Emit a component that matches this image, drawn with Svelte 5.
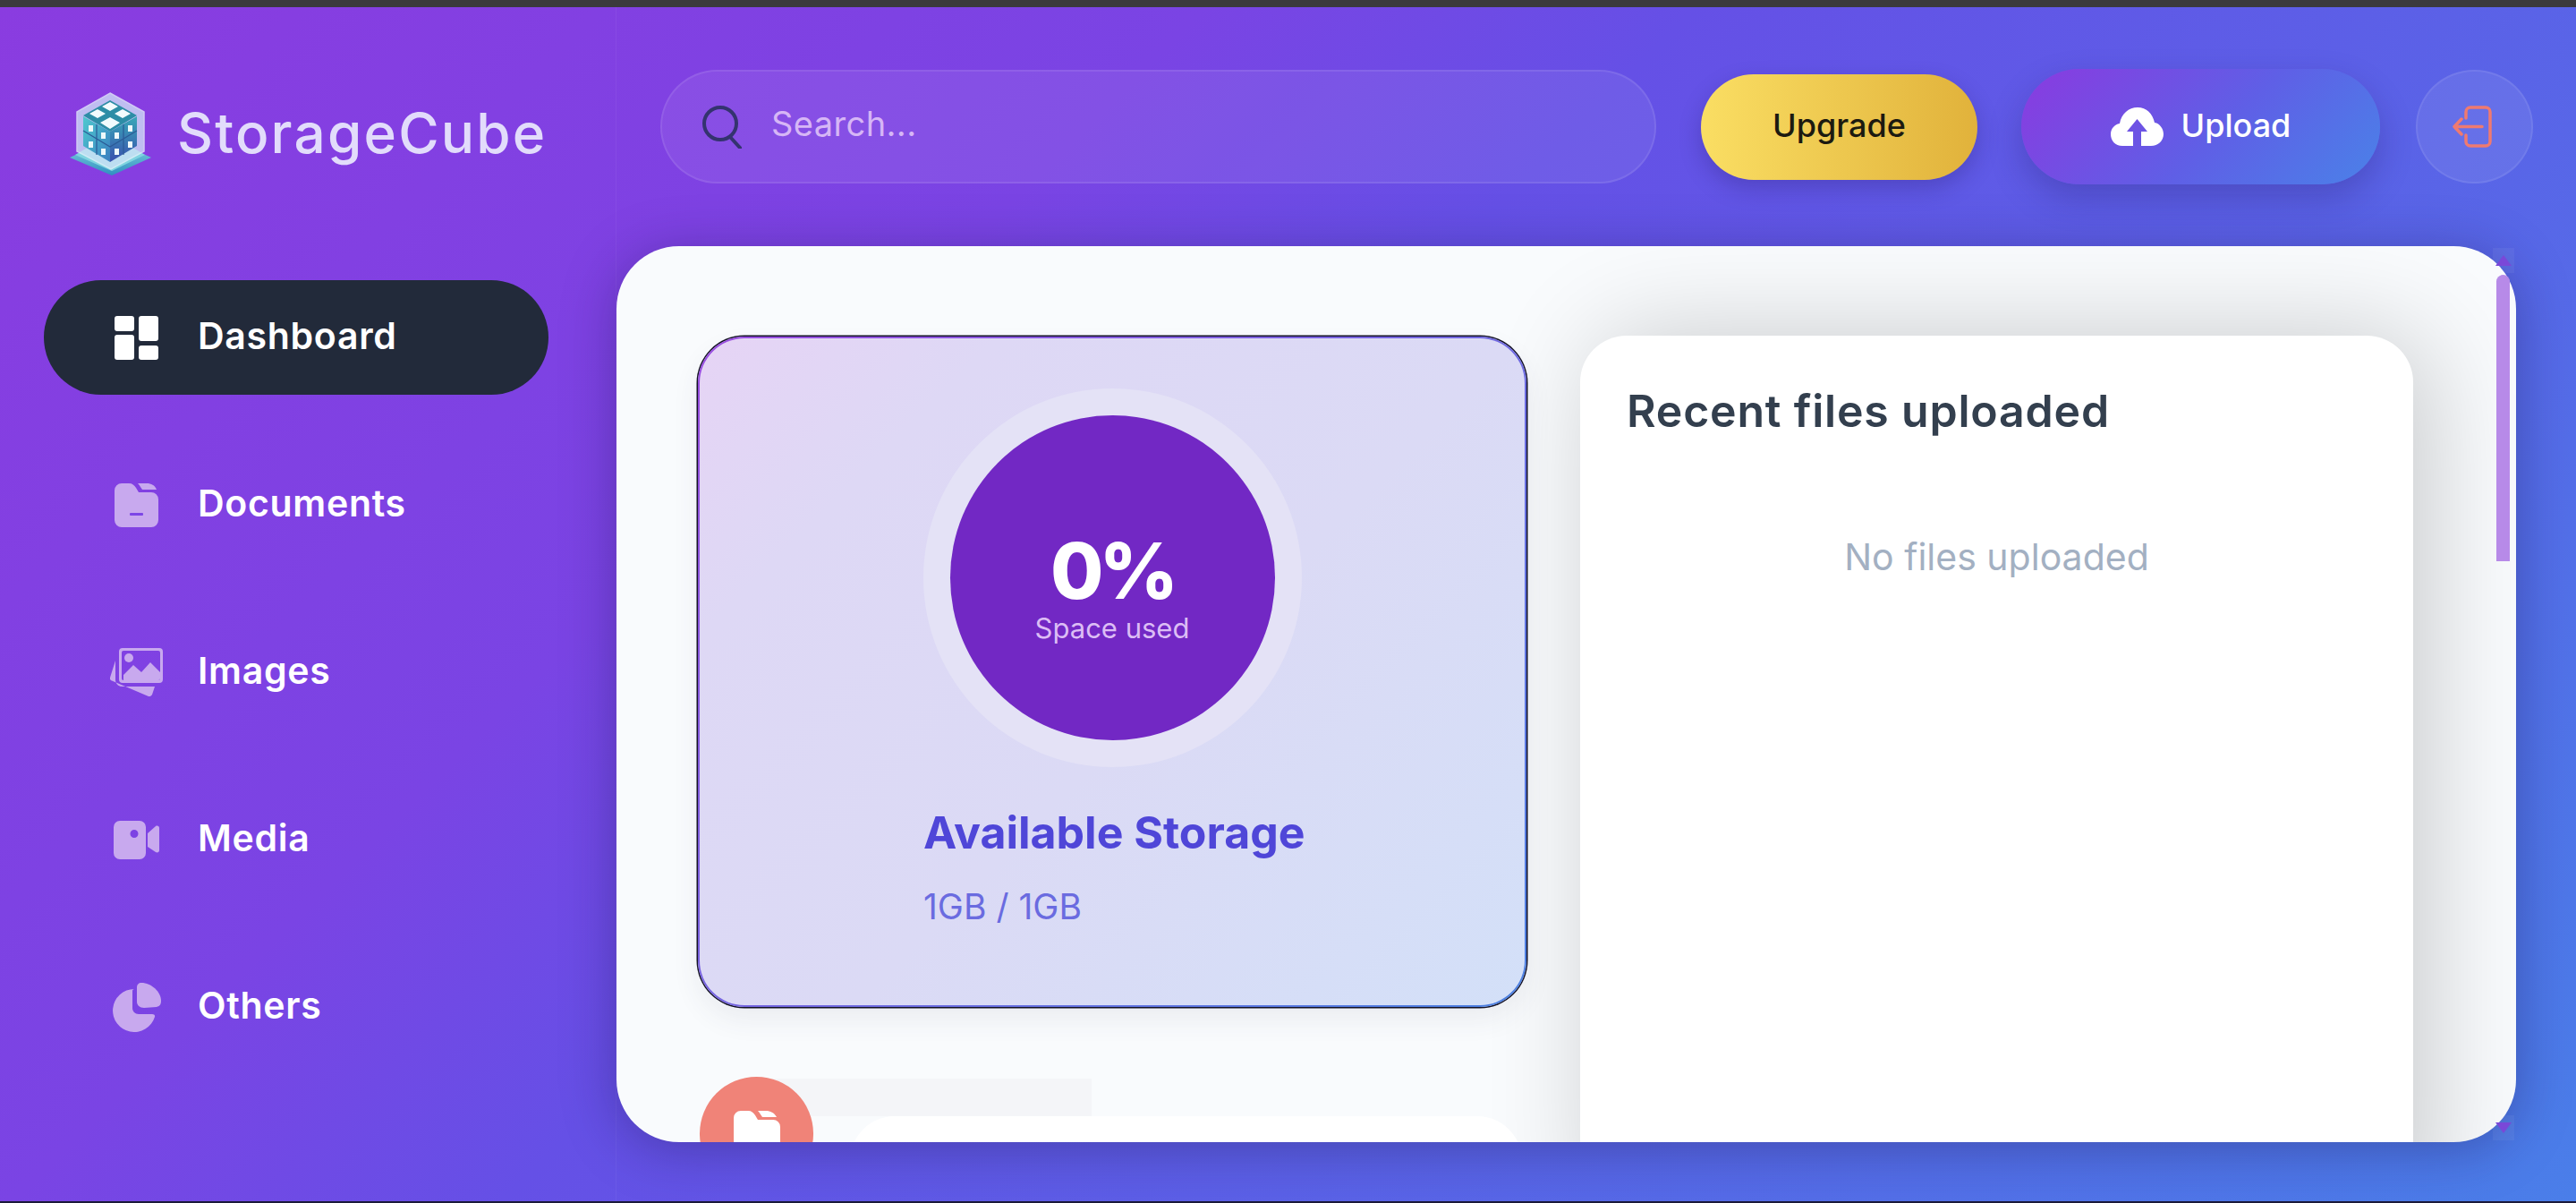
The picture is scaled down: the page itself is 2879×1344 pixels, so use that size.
<script>
  // StorageCube dashboard, empty account state
  const nav = [
    { key: 'dashboard', label: 'Dashboard', active: true },
    { key: 'documents', label: 'Documents' },
    { key: 'images', label: 'Images' },
    { key: 'media', label: 'Media' },
    { key: 'others', label: 'Others' }
  ];
  const used = 0;
</script>

<div class="app">
  <div class="chrome"></div>
  <div class="shell">
    <aside class="sidebar">
      <div class="brand">
        <svg class="logo" viewBox="0 0 95 93">
          <defs>
            <linearGradient id="plate" x1="0" y1="0" x2="0" y2="1"><stop offset="0" stop-color="#8fdbe4"/><stop offset="1" stop-color="#2f8fc0"/></linearGradient>
            <linearGradient id="faceL" x1="0" y1="0" x2="1" y2="1"><stop offset="0" stop-color="#4fc9cf"/><stop offset="1" stop-color="#3a7fc0"/></linearGradient>
            <linearGradient id="faceR" x1="0" y1="0" x2="0" y2="1"><stop offset="0" stop-color="#38a8b8"/><stop offset="1" stop-color="#3a50ae"/></linearGradient>
          </defs>
          <path d="M47 52 93 73 49 93 2 73z" fill="url(#plate)"/>
          <path d="M47 47 86 70 49 88 8 70z" fill="#7fd4e0"/>
          <path d="M47 1 85 22V66L48 86 10 66V22z" fill="#cfe2f6" opacity=".78" stroke="#e6f2fb" stroke-width="1.5"/>
          <path d="M47 9 77 26 47 44 17 26z" fill="#2d8da6"/>
          <path d="M17 27 47 44V78L17 60z" fill="url(#faceL)"/>
          <path d="M77 27 47 44V78L77 60z" fill="url(#faceR)"/>
          <path d="M47 11 56 16 47 21 38 16zM33 19 42 24 33 29 24 24zM61 19 70 24 61 29 52 24zM47 28 58 34 47 41 36 34z" fill="#f2fbfd"/>
          <path d="M32 36V70M62 36V70M17 43 47 61 77 43" stroke="#2b5a96" stroke-width="1.2" fill="none"/>
          <path d="M23 37h5v7h-5zM37 45h5v7h-5zM23 55h5v7h-5zM37 63h5v7h-5zM52 45h5v7h-5zM67 37h5v7h-5zM52 63h5v7h-5zM67 55h5v7h-5z" fill="#eef9fb"/>
        </svg>
        <span class="brand-name">StorageCube</span>
      </div>

      <nav class="nav">
        {#each nav as item}
          <a class="nav-item" class:active={item.active} href="#{item.key}">
            <span class="nav-icon">
              {#if item.key === 'dashboard'}
                <svg viewBox="0 0 49 49" width="49" height="49" fill="#fff">
                  <rect x="0" y="0" width="22" height="17" rx="3"/>
                  <rect x="0" y="21" width="22" height="28" rx="3"/>
                  <rect x="27" y="0" width="22" height="28" rx="3"/>
                  <rect x="27" y="33" width="22" height="16" rx="3"/>
                </svg>
              {:else if item.key === 'documents'}
                <svg viewBox="0 0 49 49" width="49" height="49" fill="#c8a9ee">
                  <path d="M0 8a8 8 0 0 1 8-8h8c4 0 6 2 8 5l3 5h14a8 8 0 0 1 8 8v23a8 8 0 0 1-8 8H8a8 8 0 0 1-8-8z"/>
                  <path d="M26 0h10c5 0 9 2 11 7H31c-2-3-3-5-5-7z"/>
                  <rect x="17" y="33" width="15" height="3" rx="1" fill="#7d46e6"/>
                </svg>
              {:else if item.key === 'images'}
                <svg viewBox="0 0 59 54" width="59" height="54" fill="#c8a9ee">
                  <path fill-rule="evenodd" d="M14 0h41a4 4 0 0 1 4 4v31a4 4 0 0 1-4 4H14a4 4 0 0 1-4-4V4a4 4 0 0 1 4-4zm1 3a2 2 0 0 0-2 2v29a2 2 0 0 0 2 2h39a2 2 0 0 0 2-2V5a2 2 0 0 0-2-2z"/>
                  <path d="M15 30 26 19l9 8 10-11 11 11v7a2 2 0 0 1-2 2H15z"/>
                  <circle cx="21" cy="11" r="5"/>
                  <path d="M6 14 0 33c-.5 2 .5 3 2 3.500L43 54c2 .3 3-.5 4-2l3-9H14c-5 0-8-3-8-8z"/>
                </svg>
              {:else if item.key === 'media'}
                <svg viewBox="0 0 51 43" width="51" height="43" fill="#c8a9ee">
                  <path fill-rule="evenodd" d="M7 0h22a7 7 0 0 1 7 7v29a7 7 0 0 1-7 7H7a7 7 0 0 1-7-7V7a7 7 0 0 1 7-7zm16 10a4.500 4.500 0 1 0 0 9 4.500 4.500 0 0 0 0-9z"/>
                  <path d="M38 14 47 6c2-1 4 0 4 2v25c0 2-2 3-4 2l-9-6z"/>
                </svg>
              {:else}
                <svg viewBox="0 0 55 55" width="55" height="55" fill="#c8a9ee">
                  <path d="M25 7a24 24 0 1 0 23 31c.5-2-1-3-3-3H30c-4 0-7-3-7-7V9c0-1 1-2 2-2z"/>
                  <path d="M28 5c0-3 2-5 5-5 11 0 22 10 22 20 0 5-2 6-5 7l-14 1c-5 0-8-3-8-7z"/>
                </svg>
              {/if}
            </span>
            <span class="nav-label">{item.label}</span>
          </a>
        {/each}
      </nav>
    </aside>

    <main class="main">
      <header class="topbar">
        <div class="search">
          <svg class="search-icon" viewBox="0 0 46 48" width="46" height="48" fill="none" stroke="#34336f" stroke-width="4">
            <circle cx="21" cy="20" r="18"/>
            <path d="M32 35l11 12" stroke-linecap="round"/>
          </svg>
          <span class="placeholder">Search...</span>
        </div>
        <button class="btn upgrade"><span>Upgrade</span></button>
        <button class="btn upload">
          <svg viewBox="0 0 59 43" width="59" height="43">
            <path fill="#fff" fill-rule="evenodd" d="M13 43C5 43 0 37 0 30c0-6 4-11 10-12C12 7 20 0 30 0s17 7 19 17c6 1 10 7 10 13 0 7-6 13-14 13H34V27h7L29.500 13 18 27h7v16z"/>
          </svg>
          <span>Upload</span>
        </button>
        <button class="logout" aria-label="Log out">
          <svg viewBox="0 0 44 47" width="44" height="47" fill="none" stroke="#ef7a70" stroke-width="3.500" stroke-linecap="round" stroke-linejoin="round">
            <path d="M15 14V7a5 5 0 0 1 5-5h17a5 5 0 0 1 5 5v33a5 5 0 0 1-5 5H20a5 5 0 0 1-5-5v-7"/>
            <path d="M33 23.500H3M10 15l-8 8.500 8 8.500"/>
          </svg>
        </button>
      </header>

      <div class="panel-wrap">
        <section class="panel">
          <div class="grid">
            <div class="left">
              <div class="storage">
                <div class="ring">
                  <div class="disc">
                    <span class="pct">{used}%</span>
                    <span class="pct-label">Space used</span>
                  </div>
                </div>
                <div class="storage-text">
                  <h2>Available Storage</h2>
                  <p>1GB / 1GB</p>
                </div>
              </div>

              <div class="summary">
                <div class="summary-bar"></div>
                <div class="summary-card"></div>
                <span class="summary-badge">
                  <svg viewBox="0 0 52 50" width="52" height="50" fill="#fff">
                    <path d="M0 8a8 8 0 0 1 8-8h8c4 0 6 2 8 5l3 5h17a8 8 0 0 1 8 8v32H0z"/>
                    <path d="M27 0h9c5 0 9 2 12 7H32c-2-3-3-5-5-7z"/>
                  </svg>
                </span>
              </div>
            </div>

            <div class="recent">
              <h2>Recent files uploaded</h2>
              <p>No files uploaded</p>
            </div>
          </div>
        </section>

        <div class="scrollbar" aria-hidden="true">
          <span class="scroll-btn"><i class="arrow up"></i></span>
          <span class="thumb"></span>
          <span class="scroll-btn bottom"><i class="arrow down"></i></span>
        </div>
      </div>
    </main>
  </div>
  <div class="edge"></div>
</div>

<style>
  :global(body) { margin: 0; background: #111; }

  .app {
    width: 2879px; height: 1344px; overflow: hidden;
    display: flex; flex-direction: column;
    font-family: Inter, "Liberation Sans", sans-serif;
  }
  .chrome { height: 8px; flex: none; background: #3b3a3d; }
  .edge { height: 2px; flex: none; background: #1b1a3a; }

  .shell {
    flex: 1; min-height: 0; display: flex;
    background: linear-gradient(135deg, #8a3ce0 0%, #7a44e4 32%, #6550e6 45%, #4a7ee9 100%);
  }

  .sidebar {
    width: 639px; flex: none;
    border-right: 1px solid rgba(255, 255, 255, 0.05);
    padding: 95px 0 0 49px;
  }
  .brand { display: flex; align-items: center; gap: 28px; margin-left: 27px; height: 93px; }
  .logo { width: 95px; height: 93px; flex: none; }
  .brand-name { font-size: 62px; font-weight: 500; color: #e2dcfb; letter-spacing: 2.2px; margin-top: -3px; margin-left: -1px; }

  .nav { margin-top: 117px; width: 564px; display: flex; flex-direction: column; gap: 59px; }
  .nav-item {
    height: 128px; border-radius: 64px; text-decoration: none;
    display: flex; align-items: center; color: #fff;
  }
  .nav-item.active { background: #222a3a; }
  .nav-icon {
    width: 172px; flex: none; box-sizing: border-box; padding-left: 35px;
    display: flex; justify-content: center;
  }
  .nav-icon svg { display: block; }
  .nav-label { font-size: 41px; font-weight: 600; letter-spacing: 0.7px; margin-top: -4px; }

  .main { flex: 1; min-width: 0; display: flex; flex-direction: column; }

  .topbar {
    display: flex; align-items: center;
    padding: 69px 48px 0 49px; margin-bottom: 69px;
  }
  .search {
    flex: 1; height: 127px; box-sizing: border-box;
    display: flex; align-items: center; gap: 34px; padding-left: 44px;
    border-radius: 64px;
    background: rgba(255, 255, 255, 0.07);
    border: 2px solid rgba(255, 255, 255, 0.09);
  }
  .search-icon { flex: none; }
  .placeholder { font-size: 38px; color: #d6b6f6; letter-spacing: 0.4px; margin: -7px 0 0 -2px; }

  .btn { border: 0; font: inherit; display: flex; align-items: center; justify-content: center; }
  .btn span { margin-top: -3px; }
  .upgrade {
    width: 309px; height: 118px; margin-left: 50px; border-radius: 59px;
    background: linear-gradient(90deg, #fade63 0%, #e1b23b 100%);
    color: #1c1a10; font-size: 36px; font-weight: 500;
    box-shadow: 0 10px 24px rgba(30, 20, 90, 0.25);
  }
  .upload {
    width: 401px; height: 129px; margin-left: 49px; border-radius: 65px; gap: 20px;
    background: linear-gradient(135deg, #8a3ae0 0%, #5f5fe6 55%, #4a82e8 100%);
    color: #fff; font-size: 36px; font-weight: 500;
    box-shadow: 0 16px 36px rgba(30, 20, 90, 0.25);
  }
  .logout {
    width: 131px; height: 127px; margin-left: 40px; border-radius: 50%; padding: 0 6px 0 0;
    background: rgba(255, 255, 255, 0.08);
    border: 2px solid rgba(255, 255, 255, 0.08);
    display: flex; align-items: center; justify-content: center;
  }

  .panel-wrap { position: relative; height: 1001px; margin-right: 67px; }
  .panel {
    height: 100%; overflow: hidden; box-sizing: border-box;
    border-radius: 70px; background: #f9fbfd;
    box-shadow: 0 8px 60px rgba(30, 20, 80, 0.36);
    padding: 100px 115px 0 90px;
  }
  .grid { display: grid; grid-template-columns: 928px 931px; gap: 59px; height: 100%; }
  .left { min-width: 0; }

  .storage {
    position: relative; height: 749px; margin: 1px; box-sizing: border-box; overflow: hidden;
    border-radius: 52px; padding-top: 56px;
    border: 2px solid transparent;
    background:
      linear-gradient(135deg, #e6d4f5 0%, #ded8f5 20%, #dbdaf5 55%, #d3e0f8 100%) padding-box,
      linear-gradient(135deg, #9a4ce0, #4a80e0) border-box;
    box-shadow: 0 0 0 1.500px #141226, 0 14px 30px rgba(60, 60, 90, 0.08);
  }
  .ring {
    width: 423px; height: 423px; margin: 0 auto; border-radius: 50%; background: #e4e2f6;
    display: flex; align-items: center; justify-content: center;
  }
  .disc {
    width: 363px; height: 363px; border-radius: 50%; background: #7228c4;
    display: flex; flex-direction: column; align-items: center; justify-content: center;
  }
  .pct { font-size: 86px; font-weight: 800; line-height: 1; letter-spacing: -5px; color: #fff; margin-top: 24px; }
  .pct-label { font-size: 31px; color: #dcbdf5; margin-top: 2px; }
  .storage-text { margin: 44px 0 0 250px; }
  .storage-text h2 { margin: 0; font-size: 50px; font-weight: 700; color: #4f46d8; line-height: 58px; white-space: nowrap; }
  .storage-text p { margin: 31px 0 0; font-size: 39px; color: #6a6be0; line-height: 46px; }

  .summary { position: relative; height: 200px; margin-top: 78px; }
  .summary-bar { position: absolute; left: 60px; top: 2px; width: 381px; height: 42px; background: #f4f5f8; }
  .summary-card {
    position: absolute; left: 171px; right: 6px; top: 44px; height: 200px;
    background: #fff; border-radius: 50px;
  }
  .summary-badge {
    position: absolute; left: 3px; top: 0; width: 127px; height: 127px; border-radius: 50%;
    background: #f08378;
    display: flex; justify-content: center; padding-top: 38px; box-sizing: border-box;
  }

  .recent {
    background: #fff; border-radius: 52px; height: 1000px; padding: 54px 52px 0;
    box-sizing: border-box;
    box-shadow: 18px 0 120px rgba(0, 0, 0, 0.2);
  }
  .recent h2 { margin: 0; font-size: 50px; font-weight: 600; color: #333f4e; line-height: 60px; white-space: nowrap; letter-spacing: 0.8px; }
  .recent p { margin: 108px 0 0; text-align: center; font-size: 41px; color: #a3b0c2; line-height: 50px; }

  .scrollbar {
    position: absolute; left: 2097px; top: 2px; bottom: 2px; width: 24px;
    display: flex; flex-direction: column;
  }
  .scroll-btn { height: 28px; flex: none; display: flex; align-items: center; justify-content: center; background: rgba(255, 255, 255, 0.05); }
  .scroll-btn.bottom { margin-top: auto; }
  .thumb { width: 15px; height: 320px; margin: 2px 0 0 4px; border-radius: 8px 8px 0 0; background: #b78ae8; }
  .arrow { width: 0; height: 0; border-left: 9px solid transparent; border-right: 9px solid transparent; }
  .arrow.up { border-bottom: 12px solid #7a48d8; }
  .arrow.down { border-top: 12px solid #7a48d8; }
</style>
